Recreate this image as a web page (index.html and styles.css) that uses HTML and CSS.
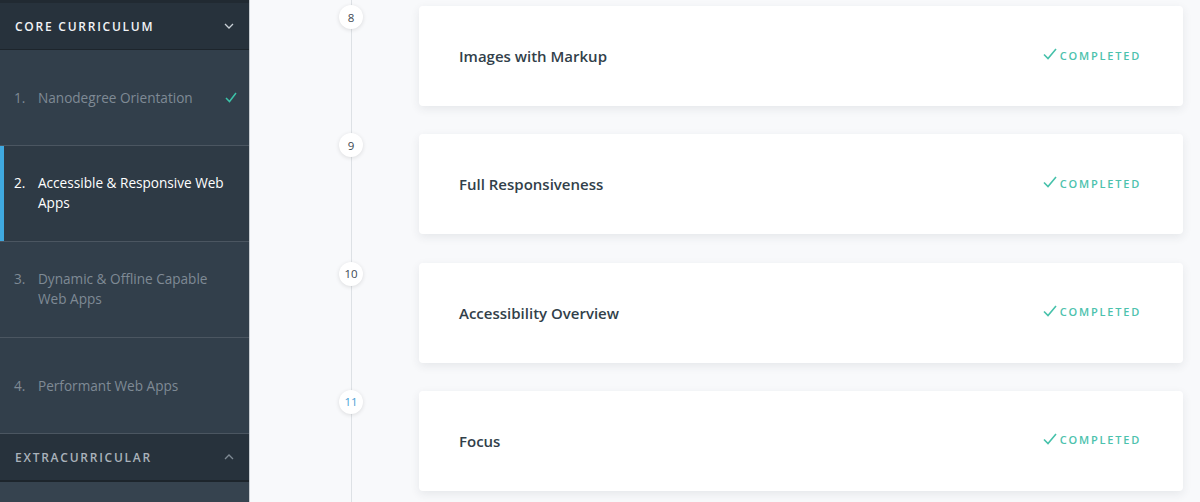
FILE: index.html
```html
<!DOCTYPE html>
<html lang="en">
<head>
<meta charset="utf-8">
<title>Core Curriculum</title>
<link rel="stylesheet" href="styles.css">
</head>
<body>
<div class="page">
  <aside class="sidebar">
    <div class="section-head">
      <span class="section-title">CORE CURRICULUM</span>
      <svg class="chev" width="10" height="6" viewBox="0 0 10 6"><path d="M1 1 L5 5 L9 1" fill="none" stroke="#c9d0d6" stroke-width="1.3"/></svg>
    </div>
    <ul class="items">
      <li class="item done"><span class="num">1.</span><span class="label">Nanodegree Orientation</span>
        <svg class="tick" width="12" height="11" viewBox="0 0 12 11"><path d="M1 6 L4.5 9.5 L11 1" fill="none" stroke="#3cc3a9" stroke-width="1.5"/></svg></li>
      <li class="item active two-line"><span class="num">2.</span><span class="label">Accessible &amp; Responsive Web Apps</span></li>
      <li class="item two-line"><span class="num">3.</span><span class="label">Dynamic &amp; Offline Capable Web Apps</span></li>
      <li class="item"><span class="num">4.</span><span class="label">Performant Web Apps</span></li>
    </ul>
    <div class="section-head extra">
      <span class="section-title">EXTRACURRICULAR</span>
      <svg class="chev" width="10" height="6" viewBox="0 0 10 6"><path d="M1 5 L5 1 L9 5" fill="none" stroke="#7f8a94" stroke-width="1.3"/></svg>
    </div>
    <div class="sidebar-rest"></div>
  </aside>
  <main class="timeline">
    <div class="row">
      <span class="step">8</span>
      <div class="card"><h3 class="card-title">Images with Markup</h3>
        <span class="status"><svg width="14" height="12" viewBox="0 0 14 12"><path d="M1 6.5 L5 10.5 L13 1" fill="none" stroke="#45c1aa" stroke-width="1.6"/></svg>COMPLETED</span></div>
    </div>
    <div class="row">
      <span class="step">9</span>
      <div class="card"><h3 class="card-title">Full Responsiveness</h3>
        <span class="status"><svg width="14" height="12" viewBox="0 0 14 12"><path d="M1 6.5 L5 10.5 L13 1" fill="none" stroke="#45c1aa" stroke-width="1.6"/></svg>COMPLETED</span></div>
    </div>
    <div class="row">
      <span class="step">10</span>
      <div class="card"><h3 class="card-title">Accessibility Overview</h3>
        <span class="status"><svg width="14" height="12" viewBox="0 0 14 12"><path d="M1 6.5 L5 10.5 L13 1" fill="none" stroke="#45c1aa" stroke-width="1.6"/></svg>COMPLETED</span></div>
    </div>
    <div class="row">
      <span class="step current">11</span>
      <div class="card"><h3 class="card-title">Focus</h3>
        <span class="status"><svg width="14" height="12" viewBox="0 0 14 12"><path d="M1 6.5 L5 10.5 L13 1" fill="none" stroke="#45c1aa" stroke-width="1.6"/></svg>COMPLETED</span></div>
    </div>
  </main>
</div>
</body>
</html>
```

FILE: styles.css
```css
* { box-sizing: border-box; }
html, body { margin: 0; padding: 0; }
body {
  font-family: "Open Sans", "Noto Sans", sans-serif;
  background: #f8f9fa;
  height: 502px;
  overflow: hidden;
}
.page { display: flex; height: 502px; }

.sidebar {
  width: 250px;
  flex: none;
  background: #323f4b;
  border-right: 1px solid #c9ced3;
  display: flex;
  flex-direction: column;
}
.section-head {
  height: 50px;
  flex: none;
  background: #27323c;
  border-top: 3px solid #212a32;
  border-bottom: 1px solid #1d252c;
  display: flex;
  align-items: center;
  justify-content: space-between;
  padding: 0 15px 0 15px;
}
.section-title {
  color: #f2f4f6;
  font-size: 12px;
  font-weight: 600;
  letter-spacing: 1.75px;
}
.section-head.extra {
  height: 48px;
  border-top: none;
  border-bottom: 2px solid #1d252c;
}
.section-head.extra .section-title { color: #aab3bb; }

.items { list-style: none; margin: 0; padding: 0; }
.item {
  height: 96px;
  border-bottom: 1px solid #4b5661;
  display: flex;
  align-items: center;
  padding: 0 12px 0 14px;
  color: #7f8a95;
  font-size: 13.6px;
  line-height: 20px;
  position: relative;
}
.item .num { width: 24px; flex: none; }
.item .label { flex: 1; }
.item .tick { flex: none; }
.item.two-line { align-items: flex-start; padding-top: 27px; }
.item.active { color: #ffffff; background: #2e3a45; }
.item.active::before {
  content: "";
  position: absolute;
  left: 0; top: 0; bottom: 0;
  width: 4px;
  background: #3fa9e0;
}
.sidebar-rest { flex: 1; background: #36434f; }

.timeline {
  flex: 1;
  padding: 6px 17px 0 89px;
  display: flex;
  flex-direction: column;
  gap: 28.3px;
  background: #f8f9fb linear-gradient(#dde1e5, #dde1e5) no-repeat 101px 0 / 1px 100%;
}
.row { display: flex; align-items: flex-start; gap: 56px; }
.step {
  width: 24px; height: 24px;
  flex: none;
  border-radius: 50%;
  background: #fff;
  box-shadow: 0 1px 4px rgba(0,0,0,0.12);
  display: flex; align-items: center; justify-content: center;
  font-size: 11.5px;
  font-weight: 400;
  color: #3d4852;
  margin-top: -1px;
}
.step.current { color: #4a9fd6; }
.card {
  flex: 1;
  height: 100px;
  background: #fff;
  border-radius: 4px;
  box-shadow: 0 3px 10px rgba(40, 50, 70, 0.09);
  display: flex;
  align-items: center;
  justify-content: space-between;
  padding: 0 42px 0 40px;
}
.card-title {
  margin: 0;
  font-size: 15px;
  font-weight: 600;
  color: #323f4a;
}
.status {
  display: flex;
  align-items: center;
  gap: 3px;
  color: #4cc2ad;
  font-size: 11px;
  font-weight: 600;
  letter-spacing: 1.8px;
  margin-top: -2px;
}
.status svg { margin-top: -2px; }
```
